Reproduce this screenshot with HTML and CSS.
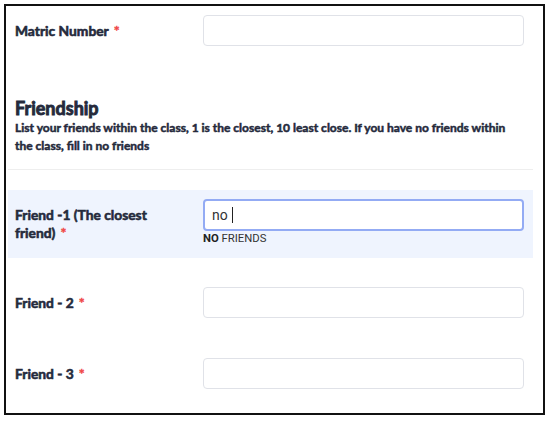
FILE: index.html
```html
<!DOCTYPE html>
<html>
<head>
<meta charset="utf-8">
<link rel="stylesheet" href="styles.css">
</head>
<body>
<div class="frame">
  <div class="row row-matric">
    <label class="label">Matric Number<span class="req">*</span></label>
    <div class="field"><div class="input"></div></div>
  </div>

  <div class="section">
    <h2 class="section-title">Friendship</h2>
    <p class="section-desc">List your friends within the class, 1 is the closest, 10 least close. If you have no friends within the class, fill in no friends</p>
  </div>

  <div class="row row-active">
    <label class="label"><span class="label-line">Friend -1 (The closest</span> <span class="label-line">friend)<span class="req">*</span></span></label>
    <div class="field">
      <div class="input input-focus">no<span class="caret"></span></div>
      <div class="hint"><b>NO</b> FRIENDS</div>
    </div>
  </div>

  <div class="row">
    <label class="label">Friend - 2<span class="req">*</span></label>
    <div class="field"><div class="input"></div></div>
  </div>

  <div class="row">
    <label class="label">Friend - 3<span class="req">*</span></label>
    <div class="field"><div class="input"></div></div>
  </div>
</div>
</body>
</html>
```

FILE: styles.css
```css
html, body {
  margin: 0;
  padding: 0;
  background: #ffffff;
}

body {
  font-family: "Lato", "Noto Sans", sans-serif;
  color: #252a3c;
}

.frame {
  margin: 4px;
  width: 525px;
  height: 407px;
  border: 2px solid #111111;
  padding: 0 10px 0 2px;
  overflow: hidden;
}

.row {
  display: flex;
  align-items: flex-start;
  padding: 9px 9px 11px 7px;
  margin-bottom: 20px;
}

.row-matric {
  margin-bottom: 40px;
}

.row-active {
  background: #eff4fe;
  margin-top: 20px;
  padding-bottom: 12px;
}

.label {
  width: 188px;
  flex: none;
  box-sizing: border-box;
  padding: 7px 22px 0 0;
  font-size: 13.8px;
  font-weight: 700;
  line-height: 18px;
  -webkit-text-stroke: 0.6px #252a3c;
}

.label-line {
  display: block;
}

.req {
  color: #f04646;
  margin-left: 5px;
  font-size: 14px;
  line-height: 1;
  -webkit-text-stroke: 0.4px #f04646;
}

.field {
  flex: 1;
}

.input {
  height: 31px;
  box-sizing: border-box;
  border: 1px solid #e0e2e8;
  border-radius: 4px;
  background: #ffffff;
}

.input-focus {
  height: 32px;
  border: 2px solid #93abf4;
  padding: 0 0 0 7px;
  font-family: "Roboto", "Liberation Sans", sans-serif;
  font-size: 14px;
  line-height: 28px;
  color: #333333;
  display: flex;
  align-items: center;
}

.caret {
  display: inline-block;
  width: 1px;
  height: 16px;
  background: #222222;
  margin-left: 4px;
}

.hint {
  font-family: "Roboto", "Liberation Sans", sans-serif;
  font-size: 11.3px;
  line-height: 14px;
  color: #333333;
  margin-top: 1px;
}

.hint b {
  font-weight: 700;
  color: #222222;
}

.section {
  padding: 1px 20px 14px 7px;
  border-bottom: 1px solid #eeeeee;
}

.section-title {
  margin: 0;
  font-size: 18px;
  font-weight: 700;
  line-height: 21px;
  -webkit-text-stroke: 0.9px #252a3c;
}

.section-desc {
  margin: 0;
  font-size: 12px;
  font-weight: 700;
  line-height: 18px;
  -webkit-text-stroke: 0.5px #252a3c;
}
```
